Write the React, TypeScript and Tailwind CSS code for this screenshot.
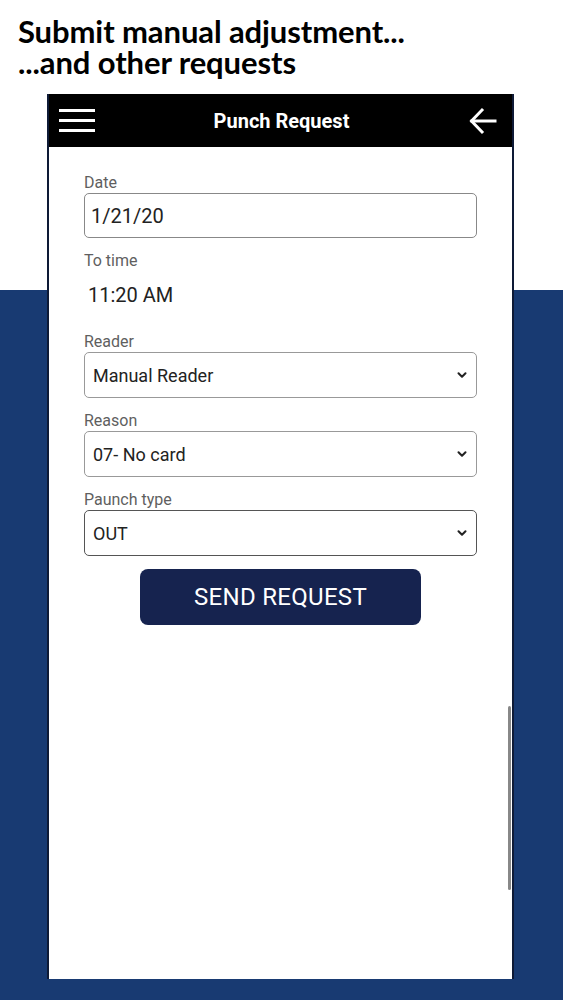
import { ChevronDown } from 'lucide-react'

function Field({ label, children }: { label: string; children: React.ReactNode }) {
  return (
    <div className="flex flex-col">
      <span className="text-[16px] leading-[18px] text-[#5f5f5f] mb-[1px]">{label}</span>
      {children}
    </div>
  )
}

function SelectBox({ value, dark }: { value: string; dark?: boolean }) {
  return (
    <div className={`h-[46px] rounded-[5px] border ${dark ? 'border-[#555]' : 'border-[#999]'} flex items-center justify-between pl-[8px] pr-[7px]`}>
      <span className="text-[18px] text-[#222]">{value}</span>
      <ChevronDown size={14} strokeWidth={3.5} className="text-[#222]" />
    </div>
  )
}

export default function App() {
  return (
    <div className="w-[563px] h-[1000px] overflow-hidden bg-[linear-gradient(to_bottom,#ffffff_290px,#183a72_290px)]">
      <div className="pl-[18px] pt-[16px] h-[94px] text-[31px] leading-[31px] font-bold text-black font-['Lato',sans-serif] tracking-[-0.1px]">
        <div>Submit manual adjustment...</div>
        <div>...and other requests</div>
      </div>
      <div className="ml-[47px] w-[467px] h-[885px] bg-white border-x-2 border-[#0e1a36] relative font-['Roboto',sans-serif]">
        <div className="h-[53px] bg-black flex items-center justify-between px-[10px]">
          <div className="w-[36px] flex flex-col gap-[7px]">
            <div className="h-[3px] bg-white" />
            <div className="h-[3px] bg-white" />
            <div className="h-[3px] bg-white" />
          </div>
          <span className="text-white text-[20px] font-bold">Punch Request</span>
          <svg width="30" height="30" viewBox="0 0 30 30" fill="none" stroke="white" strokeWidth="3" strokeLinecap="square" className="mr-[4px]">
            <path d="M27 15H4" />
            <path d="M14 4L3.5 15 14 26" />
          </svg>
        </div>
        <div className="px-[35px] pt-[27px] flex flex-col gap-[14px]">
          <Field label="Date">
            <div className="h-[45px] rounded-[5px] border border-[#888] flex items-center pl-[6px]">
              <span className="text-[20px] text-[#222]">1/21/20</span>
            </div>
          </Field>
          <Field label="To time">
            <div className="h-[48px] flex items-center pl-[4px]">
              <span className="text-[20px] text-[#222]">11:20 AM</span>
            </div>
          </Field>
          <Field label="Reader">
            <SelectBox value="Manual Reader" />
          </Field>
          <Field label="Reason">
            <SelectBox value="07- No card" />
          </Field>
          <Field label="Paunch type">
            <SelectBox value="OUT" dark />
          </Field>
          <div className="flex justify-center -mt-[1px]">
            <button className="w-[281px] h-[56px] rounded-[8px] bg-[#16234f] text-white text-[24px] tracking-[0.3px]">SEND REQUEST</button>
          </div>
        </div>
        <div className="absolute right-[1px] top-[612px] h-[184px] w-[3px] rounded bg-[#888]" />
      </div>
    </div>
  )
}
